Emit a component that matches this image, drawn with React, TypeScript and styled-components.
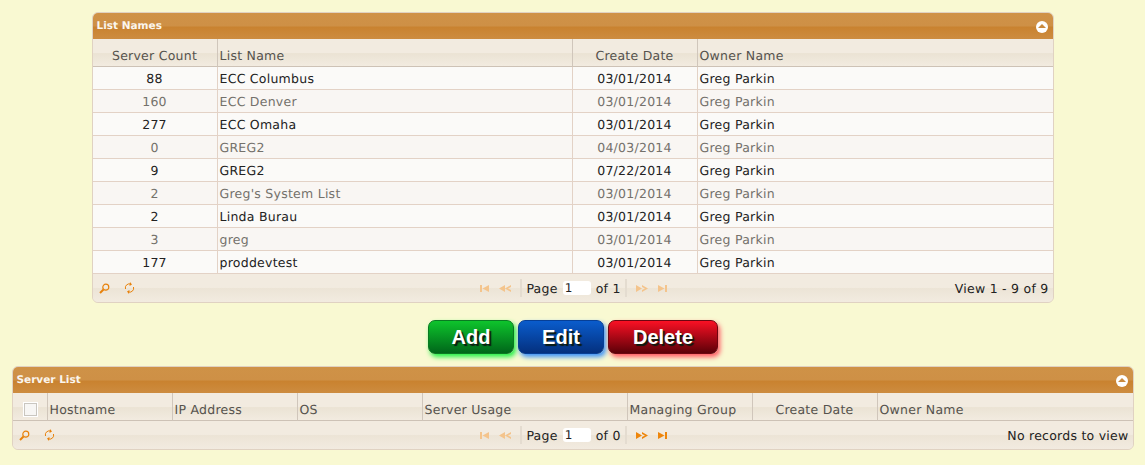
import styled, { createGlobalStyle } from "styled-components";

const GlobalStyle = createGlobalStyle`
  html, body {
    margin: 0;
    padding: 0;
    background: #f9f9d2;
    font-family: "DejaVu Sans", sans-serif;
    text-rendering: geometricPrecision;
  }
`;

const Page = styled.div`
  width: 1145px;
  height: 465px;
  overflow: hidden;
  display: flex;
  flex-direction: column;
  align-items: center;
  padding-top: 12px;
  box-sizing: border-box;
`;

const Panel = styled.div<{ $width: number }>`
  width: ${({ $width }) => $width}px;
  box-sizing: border-box;
  border: 1px solid #e0d2c2;
  border-radius: 6px;
  overflow: hidden;
  background: #f2ebe0;
`;

const TitleBar = styled.div`
  height: 26px;
  display: flex;
  align-items: center;
  justify-content: space-between;
  padding: 0 5px 0 4px;
  background: linear-gradient(
    to bottom,
    #cf9247 0%,
    #ce9046 50%,
    #c9822f 54%,
    #cd8c40 100%
  );
  color: #fbf6ee;
  font-size: 10.5px;
  font-weight: 700;
  box-sizing: border-box;
`;

const Collapse = styled.span`
  width: 12px;
  height: 12px;
  margin-top: 1px;
  border-radius: 50%;
  background: #fff;
  display: flex;
  align-items: center;
  justify-content: center;
  &::after {
    content: "";
    border-left: 4px solid transparent;
    border-right: 4px solid transparent;
    border-bottom: 4px solid #c98a3f;
    margin-top: -1px;
  }
`;

const Grid = styled.table`
  width: 100%;
  border-collapse: separate;
  border-spacing: 0;
  table-layout: fixed;
`;

const HeadCell = styled.th<{ $center?: boolean; $last?: boolean }>`
  height: 28px;
  padding: 5px 2px 0;
  box-sizing: border-box;
  font-size: 12.5px;
  font-weight: 400;
  color: #55524d;
  letter-spacing: 0.25px;
  white-space: nowrap;
  text-align: ${({ $center }) => ($center ? "center" : "left")};
  border-right: ${({ $last }) => ($last ? "0" : "1px solid #d0c6bb")};
  border-bottom: 1px solid #cdc2b6;
  background: linear-gradient(
    to bottom,
    #f2ebe0 0%,
    #f2ebe0 50%,
    #ebe3d4 54%,
    #f2ebe0 100%
  );
`;

const Row = styled.tr<{ $muted: boolean }>`
  background: ${({ $muted }) => ($muted ? "#f9f6f3" : "#fbfaf8")};
  color: ${({ $muted }) => ($muted ? "#74716b" : "#222")};
`;

const Cell = styled.td<{ $center?: boolean; $last?: boolean }>`
  height: 22px;
  padding: 0 2px;
  font-size: 12.5px;
  letter-spacing: 0.25px;
  white-space: nowrap;
  text-align: ${({ $center }) => ($center ? "center" : "left")};
  border-right: ${({ $last }) => ($last ? "0" : "1px solid #e3d2c6")};
  border-bottom: 1px solid #e3d2c6;
`;

const Pager = styled.div`
  height: 28px;
  display: grid;
  grid-template-columns: 1fr auto 1fr;
  align-items: center;
  padding: 0 4px 0 5px;
  font-size: 12.5px;
  letter-spacing: 0.25px;
  color: #222;
  background: linear-gradient(
    to bottom,
    #f2ebe0 0%,
    #f2ebe0 48%,
    #ece4d6 52%,
    #f2ebe0 100%
  );
`;

const PagerLeft = styled.div`
  display: flex;
  align-items: center;
  gap: 14px;
  padding-left: 1px;
`;

const PagerCenter = styled.div`
  display: flex;
  align-items: center;
  margin-left: 1px;
`;

const PagerRight = styled.div`
  text-align: right;
`;

const Separator = styled.span`
  width: 2px;
  height: 18px;
  background: #e4dcd0;
  margin: 0 4px;
`;

const PageInput = styled.span`
  width: 28px;
  height: 14px;
  line-height: 14px;
  margin: 0 5px;
  padding-left: 2px;
  box-sizing: border-box;
  background: #fff;
  border-radius: 3px;
  font-size: 12px;
`;

const NavGroup = styled.div`
  display: flex;
  align-items: center;
  gap: 9px;
  padding: 0 5px;
`;

const Actions = styled.div`
  display: flex;
  justify-content: center;
  gap: 4px;
  margin: 17px 0 12px;
  padding-left: 1px;
`;

const tones = {
  green: { top: "#0ec42c", bottom: "#00661a", glow: "#1ff045", line: "#0a7a22" },
  blue: { top: "#0a5ccc", bottom: "#04307e", glow: "#3a90f8", line: "#063f96" },
  red: { top: "#fa1024", bottom: "#5c0008", glow: "#ff5560", line: "#6d0610" },
};

const ActionButton = styled.button<{ $tone: keyof typeof tones; $width: number }>`
  width: ${({ $width }) => $width}px;
  height: 34px;
  padding: 0;
  border: 1px solid ${({ $tone }) => tones[$tone].line};
  border-radius: 7px;
  background: linear-gradient(
    to bottom,
    ${({ $tone }) => tones[$tone].top},
    ${({ $tone }) => tones[$tone].bottom}
  );
  box-shadow: 2px 3px 5px ${({ $tone }) => tones[$tone].glow};
  color: #fff;
  font-family: "Liberation Sans", sans-serif;
  font-size: 20px;
  font-weight: 700;
  text-shadow: 2px 2px 1px #0a1a10;
`;

const Check = styled.span`
  display: block;
  width: 11px;
  height: 11px;
  margin: 0 auto;
  background: #f7f6f4;
  border: 1px solid #c9c6c0;
  outline: 1px solid #fff;
  position: relative;
  left: 1px;
`;

const Magnifier = () => (
  <svg width="11" height="11" viewBox="0 0 11 11" fill="none">
    <circle cx="6.8" cy="4.2" r="3" stroke="#e8820c" strokeWidth="1.2" />
    <path d="M4.5 6.5 L1 10" stroke="#e8820c" strokeWidth="2" />
  </svg>
);

const Refresh = () => (
  <svg width="11" height="12" viewBox="0 0 11 12" fill="none">
    <path d="M1.5 7 A4 4 0 0 1 7 2.2" stroke="#e8820c" strokeWidth="1" />
    <path d="M9.5 5 A4 4 0 0 1 4 9.8" stroke="#e8820c" strokeWidth="1" />
    <path d="M6 0 L8 2.5 L5.5 4 Z M5 12 L3 9.5 L5.5 8 Z" fill="#e8820c" />
  </svg>
);

const navColor = (on: boolean) => (on ? "#ee860c" : "#f4c48c");

const FirstIcon = ({ on }: { on: boolean }) => (
  <svg width="10" height="7" viewBox="0 0 10 7" fill={navColor(on)}>
    <rect x="0" y="0" width="2" height="7" />
    <path d="M2.5 3.5 L9 0 V7 Z" />
  </svg>
);

const PrevIcon = ({ on }: { on: boolean }) => (
  <svg width="12" height="7" viewBox="0 0 12 7" fill={navColor(on)}>
    <path d="M0 3.5 L6 0 V7 Z M6 3.5 L12 0 V2 L9 3.5 L12 5 V7 Z" />
  </svg>
);

const NextIcon = ({ on }: { on: boolean }) => (
  <svg width="12" height="7" viewBox="0 0 12 7" fill={navColor(on)}>
    <path d="M0 0 L6 3.5 L0 7 Z M6 0 L12 3.5 L6 7 V5 L9 3.5 L6 2 Z" />
  </svg>
);

const LastIcon = ({ on }: { on: boolean }) => (
  <svg width="10" height="7" viewBox="0 0 10 7" fill={navColor(on)}>
    <rect x="8" y="0" width="2" height="7" />
    <path d="M7.5 3.5 L1 0 V7 Z" />
  </svg>
);

interface PagerBarI {
  total: number;
  info: string;
  nextOn: boolean;
}

const PagerBar = ({ total, info, nextOn }: PagerBarI) => (
  <Pager>
    <PagerLeft>
      <Magnifier />
      <Refresh />
    </PagerLeft>
    <PagerCenter>
      <NavGroup>
        <FirstIcon on={false} />
        <PrevIcon on={false} />
      </NavGroup>
      <Separator />
      Page
      <PageInput>1</PageInput>
      of {total}
      <Separator />
      <NavGroup>
        <NextIcon on={nextOn} />
        <LastIcon on={nextOn} />
      </NavGroup>
    </PagerCenter>
    <PagerRight>{info}</PagerRight>
  </Pager>
);

const lists = [
  ["88", "ECC Columbus", "03/01/2014"],
  ["160", "ECC Denver", "03/01/2014"],
  ["277", "ECC Omaha", "03/01/2014"],
  ["0", "GREG2", "04/03/2014"],
  ["9", "GREG2", "07/22/2014"],
  ["2", "Greg's System List", "03/01/2014"],
  ["2", "Linda Burau", "03/01/2014"],
  ["3", "greg", "03/01/2014"],
  ["177", "proddevtest", "03/01/2014"],
];

const serverColumns: [string, number, boolean][] = [
  ["Hostname", 125, false],
  ["IP Address", 125, false],
  ["OS", 125, false],
  ["Server Usage", 205, false],
  ["Managing Group", 125, false],
  ["Create Date", 125, true],
];

const App = () => {
  return (
    <Page>
      <GlobalStyle />
      <Panel $width={962}>
        <TitleBar>
          List Names
          <Collapse />
        </TitleBar>
        <Grid>
          <colgroup>
            <col style={{ width: 125 }} />
            <col style={{ width: 355 }} />
            <col style={{ width: 125 }} />
            <col />
          </colgroup>
          <thead>
            <tr>
              <HeadCell $center>Server Count</HeadCell>
              <HeadCell>List Name</HeadCell>
              <HeadCell $center>Create Date</HeadCell>
              <HeadCell $last>Owner Name</HeadCell>
            </tr>
          </thead>
          <tbody>
            {lists.map((list, key) => (
              <Row key={key} $muted={key % 2 === 1}>
                <Cell $center>{list[0]}</Cell>
                <Cell>{list[1]}</Cell>
                <Cell $center>{list[2]}</Cell>
                <Cell $last>Greg Parkin</Cell>
              </Row>
            ))}
          </tbody>
        </Grid>
        <PagerBar total={1} info="View 1 - 9 of 9" nextOn={false} />
      </Panel>
      <Actions>
        <ActionButton $tone="green" $width={86}>Add</ActionButton>
        <ActionButton $tone="blue" $width={86}>Edit</ActionButton>
        <ActionButton $tone="red" $width={110}>Delete</ActionButton>
      </Actions>
      <Panel $width={1122}>
        <TitleBar>
          Server List
          <Collapse />
        </TitleBar>
        <Grid>
          <colgroup>
            <col style={{ width: 35 }} />
            {serverColumns.map(([name, width]) => (
              <col key={name} style={{ width }} />
            ))}
            <col />
          </colgroup>
          <thead>
            <tr>
              <HeadCell>
                <Check />
              </HeadCell>
              {serverColumns.map(([name, , center]) => (
                <HeadCell key={name} $center={center}>
                  {name}
                </HeadCell>
              ))}
              <HeadCell $last>Owner Name</HeadCell>
            </tr>
          </thead>
        </Grid>
        <PagerBar total={0} info="No records to view" nextOn />
      </Panel>
    </Page>
  );
};

export default App;
